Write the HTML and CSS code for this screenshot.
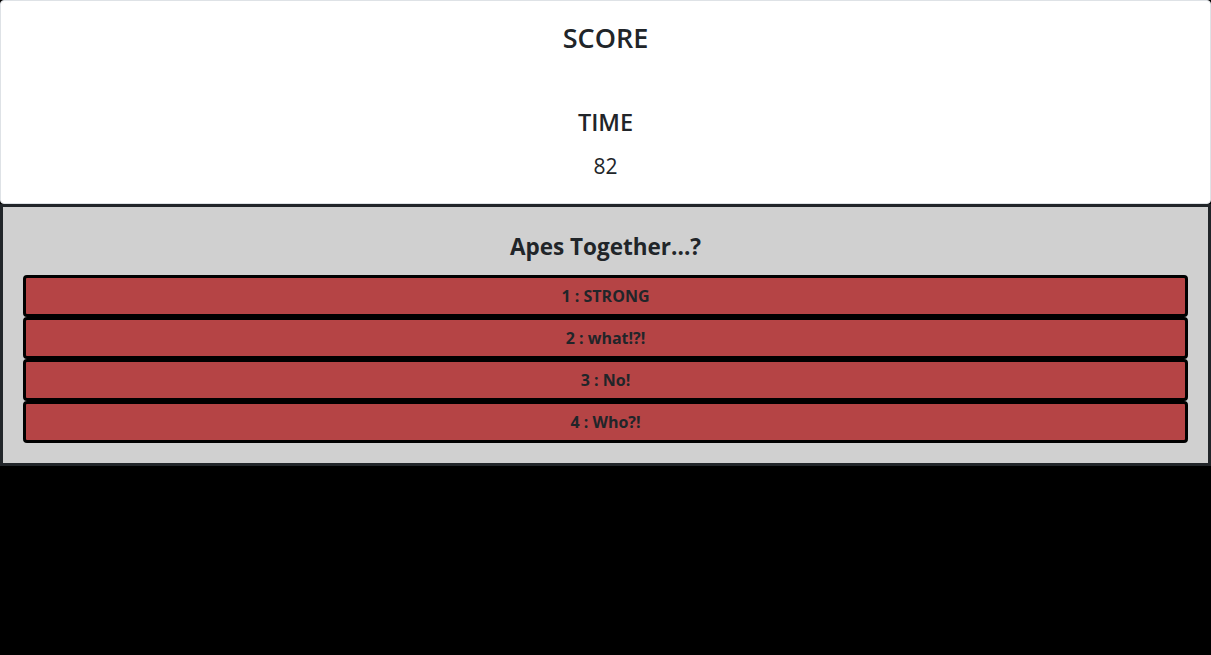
FILE: index.html
```html
<!DOCTYPE html>
<html lang="en">
<head>
<meta charset="utf-8">
<title>Quiz</title>
<link rel="stylesheet" href="styles.css">
</head>
<body>
<div class="page">
  <div class="score-card">
    <h3 class="score-title">SCORE</h3>
    <div class="score-value"></div>
    <h4 class="time-title">TIME</h4>
    <p class="time-value">82</p>
  </div>
  <div class="question">
    <h4 class="question-title">Apes Together...?</h4>
    <div class="answers">
      <button class="answer">1 : STRONG</button>
      <button class="answer">2 : what!?!</button>
      <button class="answer">3 : No!</button>
      <button class="answer">4 : Who?!</button>
    </div>
  </div>
</div>
</body>
</html>
```

FILE: styles.css
```css
html, body {
  margin: 0;
  padding: 0;
  background: #000;
  font-family: "Open Sans", "Noto Sans", "Liberation Sans", sans-serif;
  color: #212529;
}

.page {
  width: 1211px;
  display: flex;
  flex-direction: column;
}

.score-card {
  height: 204px;
  box-sizing: border-box;
  background: #fff;
  border: 1px solid #dee2e6;
  border-radius: 4px;
  display: flex;
  flex-direction: column;
  align-items: center;
  padding-top: 20px;
}

.score-title {
  margin: 0;
  font-size: 27px;
  font-weight: 600;
  line-height: 34px;
}

.score-value {
  height: 53px;
}

.time-title {
  margin: 0;
  font-size: 23.5px;
  font-weight: 600;
  line-height: 29px;
}

.time-value {
  margin: 13px 0 0;
  font-size: 21px;
  line-height: 33px;
}

.question {
  height: 262px;
  box-sizing: border-box;
  background: #d0d0d0;
  border: 3px solid #212529;
  padding: 25px 20px 0 20px;
  display: flex;
  flex-direction: column;
  align-items: stretch;
}

.question-title {
  margin: 0 0 14px;
  text-align: center;
  font-size: 22.5px;
  font-weight: 700;
  line-height: 29px;
}

.answers {
  display: flex;
  flex-direction: column;
}

.answer {
  height: 42px;
  box-sizing: border-box;
  border: 3px solid #000;
  border-radius: 4px;
  background: #b54445;
  color: #212529;
  font-family: inherit;
  font-size: 16px;
  font-weight: 700;
  padding: 0;
  text-align: center;
}
```
